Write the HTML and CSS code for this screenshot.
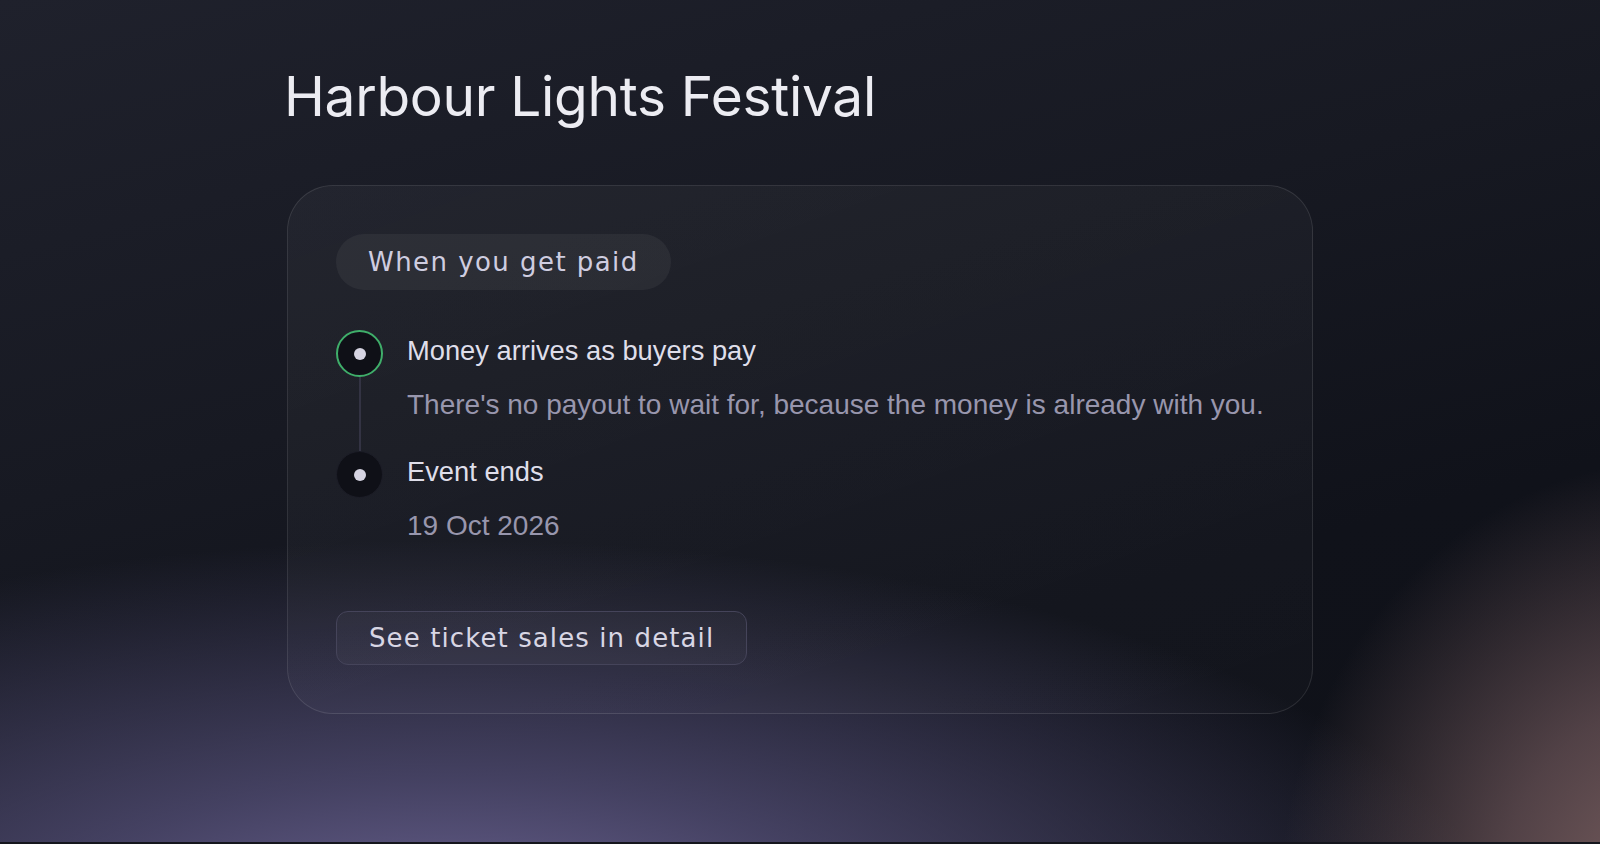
FILE: index.html
```html
<!DOCTYPE html>
<html lang="en">
<head>
    <meta charset="UTF-8">
    <meta name="viewport" content="width=device-width, initial-scale=1.0">
    <title>Harbour Lights Festival</title>
    <link rel="stylesheet" href="styles.css">
</head>
<body>
    <main class="page">
        <div class="wrap">
            <h1 class="page-title">Harbour Lights Festival</h1>

            <section class="card">
                <div class="pill">When you get paid</div>

                <ol class="timeline">
                    <li class="step">
                        <div class="rail">
                            <span class="marker marker-done"><span class="dot"></span></span>
                            <span class="line"></span>
                        </div>
                        <div class="step-body">
                            <p class="step-title">Money arrives as buyers pay</p>
                            <p class="step-text">There's no payout to wait for, because the money is already with you.</p>
                        </div>
                    </li>
                    <li class="step">
                        <div class="rail">
                            <span class="marker"><span class="dot"></span></span>
                        </div>
                        <div class="step-body">
                            <p class="step-title">Event ends</p>
                            <p class="step-text">19 Oct 2026</p>
                        </div>
                    </li>
                </ol>

                <button class="btn">See ticket sales in detail</button>
            </section>
        </div>
    </main>
</body>
</html>
```

FILE: styles.css
```css
html {
    background-color: #15161d;
}
body {
    margin: 0;
    padding: 0;
    font-family: "Liberation Sans", Arial, sans-serif;
}
.page {
    height: 842px;
    overflow: hidden;
    background:
        radial-gradient(ellipse 400px 440px at 1680px 900px, rgba(128, 100, 100, 0.95) 0%, rgba(110, 86, 90, 0.7) 45%, rgba(60, 50, 62, 0) 100%),
        radial-gradient(ellipse 1050px 400px at 450px 940px, rgba(110, 102, 150, 1) 0%, rgba(86, 81, 122, 0.75) 40%, rgba(40, 40, 60, 0) 100%),
        linear-gradient(165deg, #1f212c 0%, #171922 40%, #10121a 70%, #0f1118 100%);
}
.wrap {
    width: 1026px;
    margin: 0 auto;
    padding-top: 63px;
}
.page-title {
    margin: 0 0 56px -3px;
    font-family: Inter, "Noto Sans", sans-serif;
    font-size: 55px;
    font-weight: 400;
    line-height: 1.2;
    color: #ececf2;
    letter-spacing: -0.3px;
}
.card {
    border: 1px solid rgba(255, 255, 255, 0.1);
    border-radius: 46px;
    padding: 48px;
    background: linear-gradient(160deg, rgba(255, 255, 255, 0.04), rgba(255, 255, 255, 0.015));
}
.pill {
    display: inline-block;
    padding: 13px 32px;
    border-radius: 28px;
    background-color: rgba(255, 255, 255, 0.05);
    font-family: "DejaVu Sans", sans-serif;
    font-size: 26px;
    line-height: 30px;
    letter-spacing: 1.45px;
    color: #cfcde0;
}
.timeline {
    list-style: none;
    margin: 40px 0 0;
    padding: 0;
}
.step {
    display: flex;
    gap: 24px;
}
.step:not(:last-child) {
    padding-bottom: 26px;
}
.rail {
    display: flex;
    flex-direction: column;
    align-items: center;
    width: 47px;
}
.marker {
    box-sizing: border-box;
    display: flex;
    align-items: center;
    justify-content: center;
    width: 47px;
    height: 47px;
    border-radius: 50%;
    background-color: #0f1017;
    border: 1px solid #1c1d27;
}
.marker-done {
    border: 2px solid #3fae6a;
}
.dot {
    width: 12px;
    height: 12px;
    border-radius: 50%;
    background-color: #d6d4e2;
}
.line {
    flex: 1;
    width: 2px;
    margin-bottom: -26px;
    background-color: #333343;
}
.step-body {
    padding-top: 1px;
}
.step-body p {
    margin: 0;
    line-height: 40px;
}
.step-title {
    font-size: 27.3px;
    color: #dfdeea;
}
.step-text {
    margin-top: 14px !important;
    font-size: 28px;
    color: #9896ad;
}
.btn {
    display: block;
    margin-top: 65px;
    padding: 11px 32px;
    border: 1px solid #45445a;
    border-radius: 12px;
    background-color: rgba(255, 255, 255, 0.03);
    font-family: "DejaVu Sans", sans-serif;
    font-size: 26px;
    line-height: 30px;
    letter-spacing: 1.1px;
    color: #d8d6e4;
    cursor: pointer;
}
```
